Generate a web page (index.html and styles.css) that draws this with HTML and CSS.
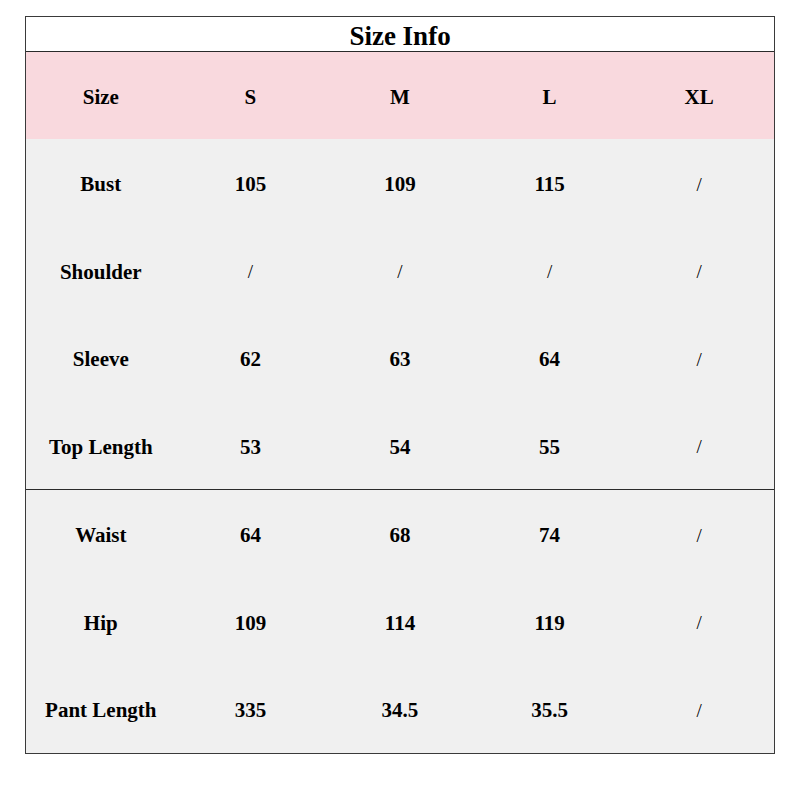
FILE: index.html
```html
<!DOCTYPE html>
<html>
<head>
<meta charset="utf-8">
<link rel="stylesheet" href="styles.css">
</head>
<body>
<div class="page">
  <div class="chart">
    <div class="title">Size Info</div>
    <div class="row head">
      <div class="cell">Size</div><div class="cell">S</div><div class="cell">M</div><div class="cell">L</div><div class="cell">XL</div>
    </div>
    <div class="section">
      <div class="row"><div class="cell">Bust</div><div class="cell">105</div><div class="cell">109</div><div class="cell">115</div><div class="cell slash">/</div></div>
      <div class="row"><div class="cell">Shoulder</div><div class="cell slash">/</div><div class="cell slash">/</div><div class="cell slash">/</div><div class="cell slash">/</div></div>
      <div class="row"><div class="cell">Sleeve</div><div class="cell">62</div><div class="cell">63</div><div class="cell">64</div><div class="cell slash">/</div></div>
      <div class="row"><div class="cell">Top Length</div><div class="cell">53</div><div class="cell">54</div><div class="cell">55</div><div class="cell slash">/</div></div>
    </div>
    <div class="section divided">
      <div class="row"><div class="cell">Waist</div><div class="cell">64</div><div class="cell">68</div><div class="cell">74</div><div class="cell slash">/</div></div>
      <div class="row"><div class="cell">Hip</div><div class="cell">109</div><div class="cell">114</div><div class="cell">119</div><div class="cell slash">/</div></div>
      <div class="row"><div class="cell">Pant Length</div><div class="cell">335</div><div class="cell">34.5</div><div class="cell">35.5</div><div class="cell slash">/</div></div>
    </div>
  </div>
</div>
</body>
</html>
```

FILE: styles.css
```css
* { box-sizing: border-box; }
html, body { margin: 0; padding: 0; background: #fff; }
body { font-family: "Liberation Serif", "Times New Roman", serif; color: #000; }
.page { width: 800px; height: 800px; padding: 16px 0 0 25px; }
.chart {
  width: 750px;
  border: 1.5px solid #3a3a3a;
  background: #f0f0f0;
}
.title {
  height: 35px;
  background: #fff;
  border-bottom: 1.5px solid #2a2a2a;
  display: flex;
  align-items: center;
  justify-content: center;
  font-weight: bold;
  font-size: 27px;
  padding-top: 4px;
}
.row {
  display: grid;
  grid-template-columns: repeat(5, 1fr);
  height: 87.5px;
}
.row.head { background: #f9d9de; height: 87px; }
.cell {
  display: flex;
  align-items: center;
  justify-content: center;
  font-weight: bold;
  font-size: 21px;
  padding-top: 4px;
}
.slash { font-weight: normal; font-size: 19px; }
.section.divided { border-top: 1.5px solid #2a2a2a; }
```
